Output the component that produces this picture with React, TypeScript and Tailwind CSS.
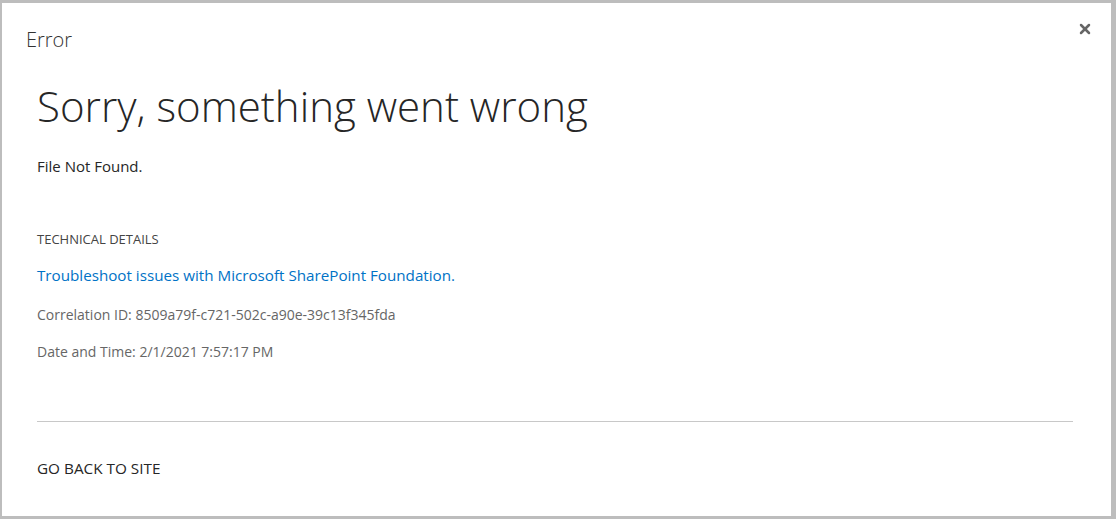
import { X } from 'lucide-react'

const font = { fontFamily: '"Open Sans", "Noto Sans", sans-serif' }

export default function App() {
    return (
        <div
            className="h-[519px] w-[1116px] bg-[#bdbdbd] pt-[3px] pl-[2px] pr-[5px] pb-[3px]"
            style={font}
        >
            <div className="relative flex h-full flex-col bg-white">
                <div className="pl-[24px] pt-[24px] text-[20px] font-light leading-[26px] text-[#333]">
                    Error
                </div>
                <button
                    className="absolute right-[18px] top-[18px] text-[#666]"
                    aria-label="Close"
                >
                    <X size={16} strokeWidth={3.75} />
                </button>

                <div className="flex flex-col px-[35px]">
                    <h1 className="mt-[26px] text-[42px] font-light leading-[54px] text-[#262626]">
                        Sorry, something went wrong
                    </h1>
                    <p className="mt-[23px] text-[15px] leading-[20px] text-[#262626]">
                        File Not Found.
                    </p>

                    <p className="mt-[54px] text-[13px] leading-[18px] text-[#444]">
                        TECHNICAL DETAILS
                    </p>
                    <a className="mt-[17px] text-[15.2px] leading-[20px] text-[#0072c6]">
                        Troubleshoot issues with Microsoft SharePoint Foundation.
                    </a>
                    <p className="mt-[20px] text-[14px] leading-[20px] text-[#666]">
                        Correlation ID: 8509a79f-c721-502c-a90e-39c13f345fda
                    </p>
                    <p className="mt-[17px] text-[14px] leading-[20px] text-[#666]">
                        Date and Time: 2/1/2021 7:57:17 PM
                    </p>

                    <div className="mt-[59px] h-px w-[1036px] bg-[#c8c8c8]" />

                    <p className="mt-[36px] text-[15.3px] leading-[20px] text-[#262626]">
                        GO BACK TO SITE
                    </p>
                </div>
            </div>
        </div>
    )
}
